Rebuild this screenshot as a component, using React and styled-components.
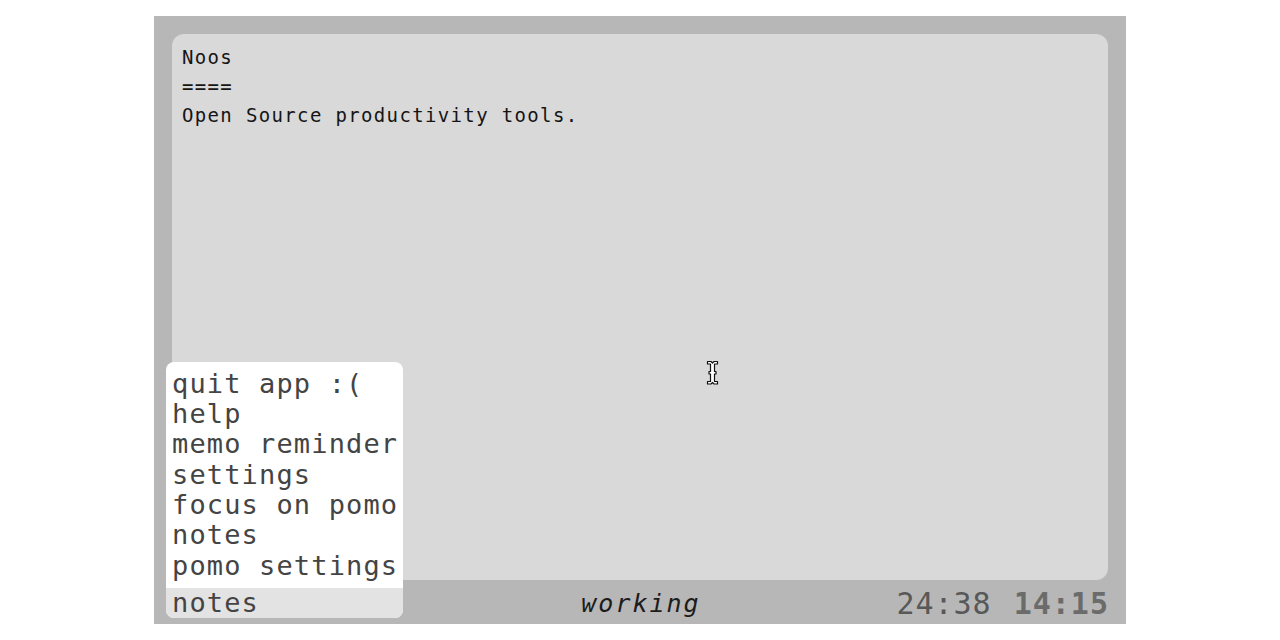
import React from "react";
import styled, { createGlobalStyle } from "styled-components";

const GlobalStyle = createGlobalStyle`
  body {
    margin: 0;
    background: #ffffff;
    font-family: "DejaVu Sans Mono", monospace;
  }
`;

const Frame = styled.div`
  position: relative;
  box-sizing: border-box;
  width: 972px;
  height: 608px;
  margin: 16px auto 0;
  padding: 18px 18px 0;
  background: #b7b7b7;
  display: flex;
  flex-direction: column;
`;

const Editor = styled.div`
  flex: 1;
  box-sizing: border-box;
  background: #d9d9d9;
  border-radius: 12px;
  padding: 9px 10px;
  color: #151515;
  font-size: 19px;
  line-height: 29px;
  letter-spacing: 1.35px;
  white-space: pre;
`;

const StatusBar = styled.div`
  height: 44px;
  display: grid;
  grid-template-columns: 1fr auto 1fr;
  align-items: center;
`;

const Mode = styled.div`
  grid-column: 2;
  font-style: italic;
  font-size: 25px;
  letter-spacing: 2px;
  margin-right: -2px;
  color: #1c1c1c;
  padding-top: 2px;
`;

const Clocks = styled.div`
  grid-column: 3;
  justify-self: end;
  display: flex;
  gap: 22px;
  font-size: 30px;
  letter-spacing: 1px;
  margin-right: -1px;
  padding-top: 2px;
`;

const Clock = styled.span`
  color: ${(p) => (p.$now ? "#6b6b6b" : "#585858")};
  font-weight: ${(p) => (p.$now ? 700 : 400)};
`;

const Palette = styled.div`
  position: absolute;
  left: 12px;
  bottom: 6px;
  width: 237px;
  background: #ffffff;
  border-radius: 8px;
  overflow: hidden;
  font-size: 27px;
  letter-spacing: 1.15px;
  color: #444444;
  white-space: nowrap;
`;

const Options = styled.ul`
  list-style: none;
  margin: 0;
  padding: 7px 6px;
`;

const Option = styled.li`
  line-height: 30.33px;
`;

const Query = styled.div`
  background: #e3e3e3;
  line-height: 30px;
  padding: 0 6px;
`;

const Cursor = styled.svg`
  position: absolute;
  left: 552px;
  top: 344px;
`;

const commands = [
  "quit app :(",
  "help",
  "memo reminder",
  "settings",
  "focus on pomo",
  "notes",
  "pomo settings",
];

const App = () => {
  return (
    <>
      <GlobalStyle />
      <Frame>
        <Editor>{"Noos\n====\nOpen Source productivity tools."}</Editor>
        <StatusBar>
          <Mode>working</Mode>
          <Clocks>
            <Clock>24:38</Clock>
            <Clock $now>14:15</Clock>
          </Clocks>
        </StatusBar>
        <Palette>
          <Options>
            {commands.map((c) => (
              <Option key={c}>{c}</Option>
            ))}
          </Options>
          <Query>notes</Query>
        </Palette>
        <Cursor width="13" height="26" viewBox="0 0 13 26">
          <path
            d="M1.5 1.5h3.5l1.5 1.5 1.5-1.5h3.5v2.5h-3v7.5h1.5v2.5h-1.5v7.5h3v2.5h-3.5l-1.5-1.5-1.5 1.5h-3.5v-2.5h3v-7.5h-1.5v-2.5h1.5v-7.5h-3z"
            fill="#ffffff"
            stroke="#111111"
            strokeWidth="1.2"
            strokeLinejoin="round"
          />
        </Cursor>
      </Frame>
    </>
  );
};

export default App;
